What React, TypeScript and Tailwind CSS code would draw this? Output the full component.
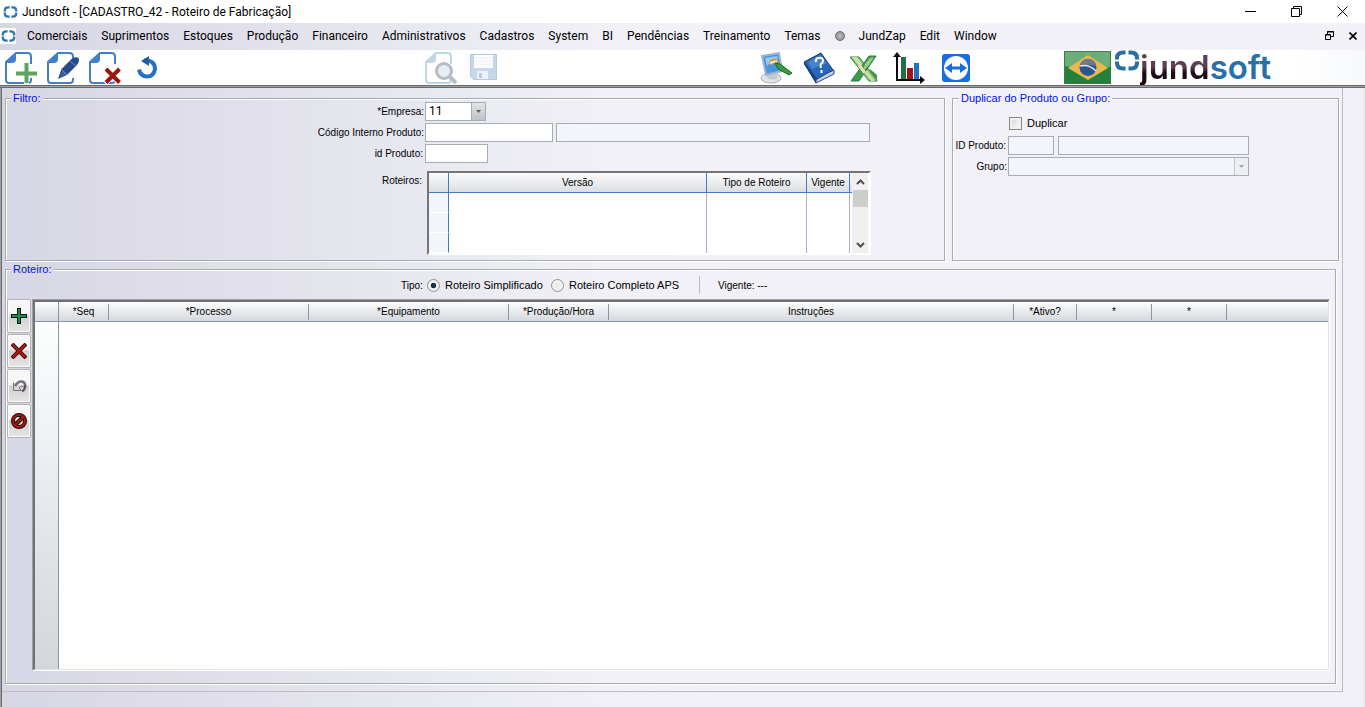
import React, { useState } from 'react';

const menus = ['Comerciais', 'Suprimentos', 'Estoques', 'Produção', 'Financeiro', 'Administrativos', 'Cadastros', 'System', 'BI', 'Pendências', 'Treinamento', 'Temas'];

const columns = [
  { label: '*Seq', width: 'w-[50px]' },
  { label: '*Processo', width: 'w-[200px]' },
  { label: '*Equipamento', width: 'w-[200px]' },
  { label: '*Produção/Hora', width: 'w-[100px]' },
  { label: 'Instruções', width: 'w-[405px]' },
  { label: '*Ativo?', width: 'w-[63px]' },
  { label: '*', width: 'w-[75px]' },
  { label: '*', width: 'w-[75px]' },
];

const small = 'text-[10px] whitespace-nowrap';
const field = 'h-[19px] border border-[#a5acb2] px-[3px] outline-none';
const group = 'border border-[#a5acb2] shadow-[1px_1px_0_#fff,inset_1px_1px_0_#fff]';
const groupTitle = '-mt-1 h-[7px] w-fit px-[2px] leading-[7px] text-[#0014e6]';
const radio =
  'h-[13px] w-[13px] appearance-none rounded-full border border-[#8e9297] bg-radial from-[#e9eaec] to-[#f8f8f8] checked:from-[#1c2f48] checked:from-30% checked:to-[#f0f0f0] checked:to-40%';

const RingIcon = ({ className }: { className: string }) => (
  <svg className={className} viewBox="0 0 26 21" fill="none" stroke="currentColor" strokeWidth="4">
    <path d="M11.500 2.500H9Q3 2.500 3 8v1.500M14.500 2.500H17q6 0 6 5.500v1.500M3 11.500V13q0 5.500 6 5.500h2.500M23 11.500V13q0 5.500-6 5.500h-2.500" />
  </svg>
);

const PageIcon = ({ color, children }: { color: string; children?: React.ReactNode }) => (
  <svg className="h-8 w-8" viewBox="0 0 32 32" fill="none">
    <path d="M26 12V4.500Q26 1 22.500 1H11L1 10v18q0 3 3 3h19q3 0 3-3v-2" fill="#fff" stroke={color} strokeWidth="2" />
    <path d="M11 1v6q0 4-4 4H1z" fill={color} />
    {children}
  </svg>
);

const DropArrow = ({ disabled }: { disabled?: boolean }) => (
  <span
    className={`pointer-events-none absolute top-px right-px flex h-[17px] w-[14px] items-center justify-center border-l ${
      disabled ? 'border-[#b9c8d2] bg-[#eeeff3]' : 'border-[#a5acb2] bg-linear-to-b from-[#e2e4e6] to-[#bfc2c5]'
    }`}
  >
    <svg className="h-[3px] w-[5px]" viewBox="0 0 5 3">
      <path d="M0 0h5L2.500 3z" fill={disabled ? '#a2a6aa' : '#5c6064'} />
    </svg>
  </span>
);

const SideButton = ({ label, children }: { label: string; children: React.ReactNode }) => (
  <button
    aria-label={label}
    className="flex h-[34px] w-6 items-center justify-center rounded-xs border border-[#b1b1b6] bg-linear-to-b from-[#f6f6f6] from-45% via-[#cfcfd0] via-50% to-[#e6e6e6] shadow-[inset_0_0_0_1px_#fafafa]"
  >
    <svg className="h-4 w-4" viewBox="0 0 16 16" fill="none">{children}</svg>
  </button>
);

export default function App() {
  const [tipo, setTipo] = useState('simplificado');

  return (
    <div className="flex min-h-screen w-full flex-col overflow-x-hidden bg-[linear-gradient(to_right,#d7d6e4_0%,#e4e4ed_24%,#f0f0f6_44%,#f2f1f7_55%)] font-['Liberation_Sans',Arial,sans-serif] text-[11px] text-black">
      {/* Title bar */}
      <header className="flex h-[23px] items-center bg-white font-[Roboto,sans-serif] text-[12px]">
        <RingIcon className="ml-[3px] h-3 w-[15px] text-[#2b78ad]" />
        <h1 className="ml-1 flex-1 whitespace-nowrap">Jundsoft - [CADASTRO_42 - Roteiro de Fabricação]</h1>
        <button aria-label="Minimizar" className="flex w-[46px] justify-center">
          <svg className="h-[11px] w-[11px]" viewBox="0 0 11 11"><path d="M0 5.500h11" stroke="#000" /></svg>
        </button>
        <button aria-label="Restaurar" className="flex w-[46px] justify-center">
          <svg className="h-[11px] w-[11px]" viewBox="0 0 11 11" fill="none" stroke="#000"><path d="M.5 2.500h8v8h-8zM2.500 2.500v-2h8v8h-2" /></svg>
        </button>
        <button aria-label="Fechar" className="flex w-[46px] justify-center">
          <svg className="h-[11px] w-[11px]" viewBox="0 0 11 11" stroke="#000"><path d="M.5.5l10 10M10.500.5l-10 10" /></svg>
        </button>
      </header>

      {/* Menu */}
      <nav className="flex h-[27px] items-center pb-[2px] font-[Roboto,sans-serif] text-[12px] whitespace-nowrap">
        <span className="mr-[11px] flex h-4 w-4 items-center justify-center bg-white">
          <RingIcon className="h-3 w-[15px] text-[#2b78ad]" />
        </span>
        <div className="flex flex-1 items-center gap-[14px]">
          {menus.map((m) => <button key={m}>{m}</button>)}
          <span className="h-[10px] w-[10px] rounded-full border border-[#6e6e6e] bg-radial from-[#c4c4c4] to-[#808080]" />
          <button>JundZap</button>
          <button>Edit</button>
          <button>Window</button>
        </div>
        <button aria-label="Restaurar janela" className="flex w-6 justify-center">
          <svg className="h-[9px] w-[9px]" viewBox="0 0 9 9" fill="none" stroke="#000">
            <path d="M.5 3.500h5v5h-5zM2.500 3v-2.500h6v5h-2.500M0 4h6M2 1h7" />
          </svg>
        </button>
        <button aria-label="Fechar janela" className="flex w-6 justify-center">
          <svg className="h-2 w-2" viewBox="0 0 8 8" stroke="#000" strokeWidth="1.600"><path d="M.5.5l7 7M7.500.5l-7 7" /></svg>
        </button>
      </nav>

      {/* Toolbar */}
      <div className="flex h-[35px] items-center bg-linear-to-r from-white from-95% to-[#f6f8fa] pl-[5px]">
        <div className="flex gap-[10px]">
          <button aria-label="Novo">
            <PageIcon color="#4180c8">
              <path d="M21.500 10v22M10 21.500h22" stroke="#fff" strokeWidth="5" />
              <path d="M21.500 11v20M11 21.500h21" stroke="#5ba561" strokeWidth="4" />
            </PageIcon>
          </button>
          <button aria-label="Editar">
            <PageIcon color="#4180c8">
              <path d="M11 27l3.500-10L24 7.500q4-3.500 7.500-1.500 1.500 4-2 7.500L20 23z" fill="#264a8c" />
              <path d="M13 26l2.500-8 5 4z" fill="#3c5f9f" />
              <path d="M15 18l5 5M23 9l6 5" stroke="#6f8cc2" />
            </PageIcon>
          </button>
          <button aria-label="Excluir">
            <PageIcon color="#4180c8">
              <path d="M16 16l15 15M31 16L16 31" stroke="#fff" strokeWidth="6" />
              <path d="M17 17l13.500 13.500M30.500 17L17 30.500" stroke="#96190c" strokeWidth="4" />
            </PageIcon>
          </button>
          <button aria-label="Atualizar">
            <svg className="h-8 w-8" viewBox="0 0 32 32" fill="none">
              <path d="M13 8.500Q24 8 24 17q-1 7.500-8 7.500-6.500 0-8-7" stroke="#2470c4" strokeWidth="4" />
              <path d="M10 9l8-5v10z" fill="#225ca0" />
            </svg>
          </button>
        </div>
        <div className="ml-[262px] flex gap-[10px]">
          <button disabled aria-label="Visualizar">
            <PageIcon color="#c0d6e3">
              <circle cx="19" cy="19" r="7.500" fill="#e8edf4" stroke="#b8bdc4" strokeWidth="3" />
              <path d="M25 25l6 6" stroke="#b8bdc4" strokeWidth="4" />
            </PageIcon>
          </button>
          <button disabled aria-label="Salvar">
            <svg className="h-8 w-8" viewBox="0 0 32 32">
              <path d="M3.500 2.500h26v25h-23l-3-3z" fill="#c7d7e9" stroke="#b5c8dd" />
              <path d="M7 3h19v13H7z" fill="#fff" />
              <path d="M7 6h19M7 9h19M7 12h19" stroke="#e6edf4" />
              <path d="M10 19h11v8H10z" fill="#edf1f5" />
              <path d="M12 21h3v5h-3z" fill="#b9cce0" />
            </svg>
          </button>
        </div>
        <div className="ml-[261px] flex gap-[13px]">
          <button aria-label="Temas">
            <svg className="h-8 w-8" viewBox="0 0 32 32">
              <ellipse cx="11" cy="26" rx="10" ry="5" fill="#dfe2e7" stroke="#a9afb8" />
              <path d="M7 20h9l2 6q-6 3-11 0z" fill="#c5cad2" />
              <path d="M2 4l17-3 3 18-16 4z" fill="#4a95e2" stroke="#9fb7cd" strokeWidth="2" />
              <path d="M5 6l12-2 1 5q-7 0-11 5z" fill="#8ecbf8" />
              <path d="M9 10q3-5 8-3l2 4q-5-2-7 2-3 1-3-3z" fill="#d9913a" />
              <path d="M10 11l7-2" stroke="#fbe8b8" strokeWidth="2" />
              <path d="M15 11l5 1 12 9-3 2-11-6z" fill="#3a9a42" stroke="#1d6726" />
            </svg>
          </button>
          <button aria-label="Ajuda">
            <svg className="h-8 w-8 overflow-visible" viewBox="0 0 32 32">
              <path d="M-1 11l12 20 18-9v-4L12 25 1 9z" fill="#c8cfda" stroke="#1f4a8c" />
              <path d="M-1 10L16 1l12 17-16 9z" fill="#2b67b8" stroke="#123c7b" />
              <path d="M3 10L15 3l7 8-15 6z" fill="#5b92d8" opacity=".6" />
              <path d="M-1 10l13 17-1 4L-1 12z" fill="#163f80" />
              <path d="M11 10q-1-4 3-4 4-1 4 3 0 2-2 3-1 1 0 4M16.500 18v3" fill="none" stroke="#fff" strokeWidth="2" />
            </svg>
          </button>
          <button aria-label="Excel">
            <svg className="h-8 w-8" viewBox="0 0 32 32">
              <path d="M20 17l7 6v6h-6z" fill="#3d994e" />
              <path d="M0 5h9l18 23v1h-8z" fill="#88c178" stroke="#2e8742" />
              <path d="M2 5h5l18 24h-4z" fill="#c8e2a8" />
              <path d="M19 4h7L9 29H1z" fill="#3d994e" stroke="#278040" />
              <path d="M15 12l5-6 4-1-5 8-6 6z" fill="#9ccf83" />
              <path d="M9 13l6 8" stroke="#f1dbb6" strokeWidth="3" />
            </svg>
          </button>
          <button aria-label="Gráfico">
            <svg className="h-8 w-8 overflow-visible" viewBox="0 0 32 32">
              <path d="M6 5h5v22H6z" fill="#1e7446" />
              <path d="M12 16h6v11h-6z" fill="#a01616" />
              <path d="M19 11h5v16h-5z" fill="#2071c5" />
              <path d="M2 2v26h25" fill="none" stroke="#130810" strokeWidth="2" />
              <path d="M-2 5l4-5 4 5zM25 24l5 4-5 4z" fill="#130810" />
            </svg>
          </button>
          <button aria-label="Acesso remoto">
            <svg className="h-8 w-8" viewBox="0 0 32 32">
              <rect x="2" y="2" width="28" height="28" rx="3" fill="#1a6de0" />
              <circle cx="16" cy="16" r="12" fill="#fff" />
              <path d="M5 16l7-5v3.500h8V11l7 5-7 5v-3.500h-8V21z" fill="#1a6de0" />
            </svg>
          </button>
        </div>
        <svg className="ml-[92px] h-[33px] w-[47px] shrink-0" viewBox="0 0 47 33">
          <rect width="47" height="33" fill="#25803b" />
          <path d="M0 0h47v16Q24 19 0 15z" fill="#6cae78" />
          <path d="M.5.5h46v32H.5z" fill="none" stroke="#387c47" />
          <path d="M4 17L24 4l20 13-20 12z" fill="#eab64e" />
          <circle cx="24" cy="16.500" r="8.500" fill="#2e568e" />
          <path d="M16 15q2-7 8-7 7 0 8 7-8-2-16 0z" fill="#6f7789" />
          <path d="M16 15q9-2 16 5" fill="none" stroke="#dce3eb" strokeWidth="1.500" />
        </svg>
        <div className="ml-[3px] flex h-full items-start">
          <RingIcon className="h-[21px] w-[26px] shrink-0 text-[#2a6da0]" />
          <span className="font-[Inter,sans-serif] text-[33px] leading-[34px] font-semibold">
            <span className="bg-linear-to-b from-[#5c3f53] from-50% to-[#1c0a14] to-65% bg-clip-text text-transparent">jund</span>
            <span className="text-[#2a70a8]">soft</span>
          </span>
        </div>
      </div>
      <div className="h-[3px] border-y border-[#696969] bg-[#a0a0a0]" />

      {/* Work area */}
      <div className="flex flex-1 border-r border-l border-r-[#e3e3e3] border-l-[#a0a0a0]">
        <div className="flex min-w-0 flex-1 flex-col border-l border-[#696969]">
          <main className="mr-[21px] flex flex-1 flex-col border-r border-b border-[#bcbcc2] pt-[10px] pr-[3px] pb-[7px] pl-[3px]">
            <div className="flex gap-[7px]">
              <section className={`${group} min-w-0 flex-1 pb-[5px]`}>
                <h2 className={`${groupTitle} ml-[5px] bg-[#d8d7e5]`}>Filtro:</h2>
                <div className={`${small} grid grid-cols-[419px_1fr] gap-y-[2px]`}>
                  <label htmlFor="empresa" className="pr-px text-right leading-[19px]">*Empresa:</label>
                  <div className="relative w-[61px]">
                    <select id="empresa" className={`${field} block w-full appearance-none bg-white font-[Roboto,sans-serif] text-[12px] leading-[17px]`}>
                      <option>11</option>
                    </select>
                    <DropArrow />
                  </div>
                  <label htmlFor="codigo" className="pr-px text-right leading-[19px]">Código Interno Produto:</label>
                  <div className="flex gap-[3px]">
                    <input id="codigo" className={`${field} w-32 bg-white`} />
                    <input aria-label="Descrição do produto" readOnly className={`${field} w-[314px] bg-[#f2f6fb]`} />
                  </div>
                  <label htmlFor="idProduto" className="pr-[2px] text-right leading-[19px]">id Produto:</label>
                  <div className="flex">
                    <input id="idProduto" className={`${field} w-[63px] bg-white`} />
                  </div>
                  <span className="mt-[6px] pr-[3px] text-right leading-[19px]">Roteiros:</span>
                  <div className="mt-[6px] ml-[2px] flex h-[84px] w-[444px] border-2 border-t-[#757575] border-r-white border-b-white border-l-[#757575] bg-white">
                    <table aria-label="Roteiros" className="h-full w-[423px] table-fixed border-separate border-spacing-0">
                      <thead>
                        <tr className="h-5 bg-linear-to-b from-[#fbfbfc] to-[#d9dce0]">
                          <th className="w-5 border-r border-b border-[#3f7dc0] p-0"></th>
                          <th className="w-[258px] border-r border-b border-[#3f7dc0] p-0 font-normal">Versão</th>
                          <th className="w-[100px] border-r border-b border-[#3f7dc0] p-0 font-normal">Tipo de Roteiro</th>
                          <th className="w-[43px] border-r border-b border-[#3f7dc0] p-0 font-normal">Vigente</th>
                          <th className="border-b border-[#3f7dc0] p-0"></th>
                        </tr>
                      </thead>
                      <tbody>
                        {[0, 1, 2].map((row) => (
                          <tr key={row}>
                            <td className="border-r border-b border-r-[#3f7dc0] border-b-white bg-[#f2f6fb] p-0"></td>
                            <td className="border-r border-[#acacca] p-0"></td>
                            <td className="border-r border-[#acacca] p-0"></td>
                            <td className="border-r border-[#acacca] p-0"></td>
                            <td className="p-0"></td>
                          </tr>
                        ))}
                      </tbody>
                    </table>
                    <div className="mr-px flex flex-1 flex-col items-center bg-[#f0f0f0]">
                      <svg className="h-[17px] w-[9px]" viewBox="0 0 9 17" fill="none" stroke="#505050" strokeWidth="2"><path d="M1 11l3.500-3.500L8 11" /></svg>
                      <div className="h-[17px] w-[15px] bg-[#cdcdcd]" />
                      <svg className="mt-auto h-[17px] w-[9px]" viewBox="0 0 9 17" fill="none" stroke="#505050" strokeWidth="2"><path d="M1 7l3.500 3.500L8 7" /></svg>
                    </div>
                  </div>
                </div>
              </section>

              <section className={`${group} w-[387px]`}>
                <h2 className={`${groupTitle} ml-[6px] bg-[#f2f1f7]`}>Duplicar do Produto ou Grupo:</h2>
                <label className="mt-3 mb-1 ml-14 flex h-[18px] items-center gap-[5px]">
                  <input type="checkbox" className="h-[13px] w-[13px] appearance-none border border-[#8c8880] bg-linear-to-br from-[#cfd4db] to-white shadow-[inset_0_0_0_2px_#f2f1f0] checked:from-[#456]" />
                  Duplicar
                </label>
                <div className={`${small} grid grid-cols-[55px_241px] gap-y-[2px]`}>
                  <label htmlFor="idDuplicar" className="pr-[2px] text-right leading-[19px]">ID Produto:</label>
                  <div className="flex gap-1">
                    <input id="idDuplicar" disabled className={`${field} w-[46px] bg-[#f2f6fb]`} />
                    <input aria-label="Descrição" disabled className={`${field} w-[191px] bg-[#f2f6fb]`} />
                  </div>
                  <label htmlFor="grupo" className="pr-px text-right leading-[19px]">Grupo:</label>
                  <div className="relative">
                    <select id="grupo" disabled className={`${field} block w-full appearance-none bg-[#f2f6fb]`}></select>
                    <DropArrow disabled />
                  </div>
                </div>
              </section>
            </div>

            <section className={`${group} mt-2 mr-[3px] flex min-w-0 flex-1 flex-col pr-[5px] pb-3 pl-px`}>
              <h2 className={`${groupTitle} ml-1 bg-[#d8d7e5]`}>Roteiro:</h2>
              <div className="mb-[2px] flex h-6 items-center pl-[394px]">
                <span className={`${small} w-[26px]`}>Tipo:</span>
                <label className="flex w-[124px] items-center gap-[5px]">
                  <input type="radio" name="tipo" checked={tipo === 'simplificado'} onChange={() => setTipo('simplificado')} className={radio} />
                  Roteiro Simplificado
                </label>
                <label className="flex w-[148px] items-center gap-[5px]">
                  <input type="radio" name="tipo" checked={tipo === 'completo'} onChange={() => setTipo('completo')} className={radio} />
                  Roteiro Completo APS
                </label>
                <span className={`${small} flex h-[18px] items-center border-l border-[#bcbcc2] pl-[18px]`}>Vigente: ---</span>
              </div>

              <div className="flex flex-1 gap-px">
                <div className="flex flex-col gap-px">
                  <SideButton label="Adicionar">
                    <path d="M8 0v16M0 8h16" stroke="#0b1710" strokeWidth="4" />
                    <path d="M8 1v14M1 8h14" stroke="#248a55" strokeWidth="2" />
                  </SideButton>
                  <SideButton label="Remover">
                    <path d="M1 1l14 14M15 1L1 15" stroke="#200606" strokeWidth="4" />
                    <path d="M1.500 1.500l13 13M14.500 1.500l-13 13" stroke="#a31a10" strokeWidth="2.500" />
                  </SideButton>
                  <SideButton label="Desfazer">
                    <path d="M2.500 4.500v8h8L8 10q2.500-3.500 5-1" fill="#d6d4d8" stroke="#77727a" />
                    <path d="M4 8q3-5 7-4.500 4 1 3 6-.5 2-2.500 4" stroke="#77727a" strokeWidth="2.500" />
                    <path d="M14 7q.5 4-2.500 6.500" stroke="#4e3439" />
                  </SideButton>
                  <SideButton label="Cancelar">
                    <circle cx="8" cy="8" r="6" stroke="#200606" strokeWidth="4" />
                    <path d="M4 12l8-8" stroke="#200606" strokeWidth="4" />
                    <circle cx="8" cy="8" r="6" stroke="#a31a10" strokeWidth="2" />
                    <path d="M4 12l8-8" stroke="#a31a10" strokeWidth="2" />
                  </SideButton>
                </div>
                <div className="flex min-w-0 flex-1 flex-col border border-t-[#a0a0a0] border-r-white border-b-white border-l-[#a0a0a0]">
                  <div className="grid flex-1 border-t-2 border-r border-b border-l-2 border-t-[#6f7074] border-r-[#e3e3e3] border-b-[#e3e3e3] border-l-[#6f7078]">
                    <table aria-label="Processos do roteiro" className={`${small} h-full w-full table-fixed border-separate border-spacing-0 bg-white`}>
                      <thead>
                        <tr className="h-5 bg-linear-to-b from-[#fcfdfd] to-[#d2d6dc]">
                          <th className="w-6 border-r border-b border-[#8c94a8] p-0"></th>
                          {columns.map((c, i) => (
                            <th key={i} className={`${c.width} border-b border-[#8c94a8] p-0 font-normal`}>
                              <span className="my-px block h-4 border-r border-[#8c94a8] leading-4">{c.label}</span>
                            </th>
                          ))}
                          <th className="border-b border-[#8c94a8] p-0"></th>
                        </tr>
                      </thead>
                      <tbody>
                        <tr>
                          <td className="border-r border-[#8c94a8] bg-linear-to-b from-[#fdfefe] to-[#d3d7da] p-0"></td>
                          <td colSpan={9}></td>
                        </tr>
                      </tbody>
                    </table>
                  </div>
                </div>
              </div>
            </section>
          </main>
          <footer className="h-[15px]" />
        </div>
      </div>
    </div>
  );
}
